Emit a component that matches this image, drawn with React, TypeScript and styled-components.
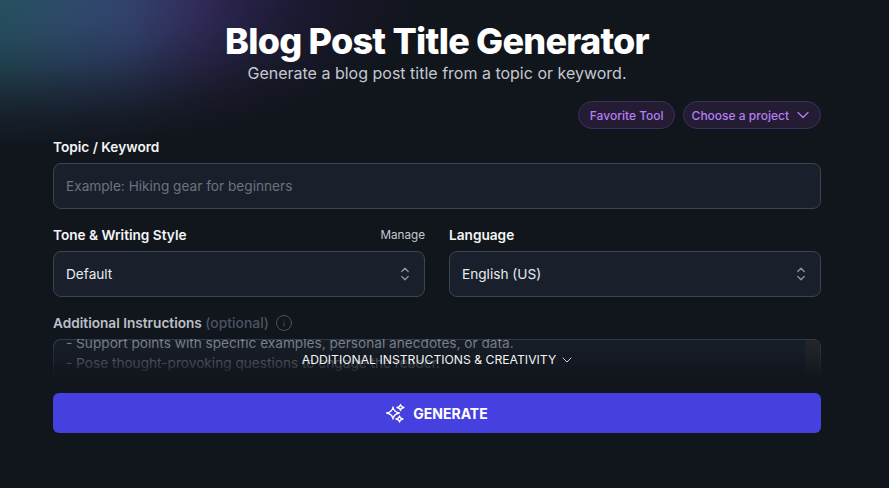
import React from 'react';
import styled, { createGlobalStyle } from 'styled-components';
import { ChevronDown, Info } from 'lucide-react';

const GlobalStyle = createGlobalStyle`
  html, body {
    margin: 0;
    padding: 0;
    background-color: #11151c;
  }
  * {
    box-sizing: border-box;
  }
`

const Page = styled.div`
  height: 488px;
  overflow: hidden;
  padding: 0 68px 0 53px;
  font-family: Inter, "Liberation Sans", sans-serif;
  color: #f3f4f6;
  background-color: #11151c;
  background-image:
    radial-gradient(
      ellipse 420px 150px at 0 0,
      rgba(17, 21, 28, 0) 0%,
      rgba(17, 21, 28, 0.1) 25%,
      rgba(17, 21, 28, 0.32) 45%,
      rgba(17, 21, 28, 0.6) 62%,
      rgba(17, 21, 28, 0.84) 80%,
      #11151c 100%
    ),
    linear-gradient(to right, #265060 0, #384a7c 130px, #42357a 210px, #38256a 300px, #38256a 420px);
  background-repeat: no-repeat;
  background-size: 100% 100%, 420px 150px;
`

const Header = styled.header`
  padding-top: 20px;
  text-align: center;
`

const Title = styled.h1`
  margin: 0;
  font-size: 36px;
  line-height: 42px;
  font-weight: 800;
  letter-spacing: -0.75px;
  color: #fff;
`

const Subtitle = styled.p`
  margin: 0;
  font-size: 16px;
  line-height: 22px;
  color: #c4c8d0;
`

const Actions = styled.div`
  display: flex;
  justify-content: flex-end;
  gap: 8px;
  margin-top: 17px;
`

const Pill = styled.button`
  display: flex;
  align-items: center;
  gap: 4px;
  height: 28px;
  padding: 0 10.5px;
  border: 1px solid #3d2f5a;
  border-radius: 14px;
  background: #231c33;
  color: #b67ef5;
  font-family: inherit;
  font-size: 12px;
  font-weight: 500;
`

const SelectPill = styled(Pill)`
  padding: 0 7px 0 7.5px;
`

const Field = styled.div`
  display: flex;
  flex-direction: column;
  min-width: 0;
`

const LabelRow = styled.div`
  display: flex;
  align-items: center;
  justify-content: space-between;
  height: 16px;
  margin-bottom: 8px;
`

const Label = styled.label`
  font-size: 13.65px;
  font-weight: 600;
  color: #f3f4f6;
`

const ManageLink = styled.span`
  font-size: 11.7px;
  color: #c4c8d0;
`

const Input = styled.div`
  display: flex;
  align-items: center;
  justify-content: space-between;
  height: 46px;
  padding: 0 14px 1px 12px;
  border: 1px solid #3c4450;
  border-radius: 8px;
  background: #19202b;
  font-size: 13.65px;
  color: #e8eaee;
`

const Placeholder = styled.span`
  color: #6b7280;
`

const TopicField = styled(Field)`
  margin-top: 10px;
`

const Row = styled.div`
  display: grid;
  grid-template-columns: 1fr 1fr;
  gap: 24px;
  margin-top: 18px;
`

const InstructionsField = styled(Field)`
  margin-top: 18px;
`

const MutedLabel = styled(Label)`
  line-height: 15px;
  color: #bcc0c8;
`

const Optional = styled.span`
  color: #4b5563;
  font-size: 13.9px;
  line-height: 1;
  font-weight: 500;
`

const LabelGroup = styled.div`
  display: flex;
  align-items: center;
  gap: 6px;
  color: #4b5563;
`

const TextBox = styled.div`
  position: relative;
  display: flex;
  flex-direction: column;
  justify-content: flex-end;
  height: 41px;
  padding: 0 13px 7px;
  overflow: hidden;
  border-radius: 8px 8px 0 0;
  box-shadow: inset 0 0 0 1px #3c4450;
  background: #19202b;
  font-size: 13.65px;
  line-height: 20px;
  color: #a3a8b0;
`

const TextLine = styled.div`
  white-space: nowrap;
`

const Scrollbar = styled.div`
  position: absolute;
  top: 1px;
  right: 1px;
  bottom: 0;
  width: 15px;
  background: #2a2a2c;
`

const Fade = styled.div`
  position: absolute;
  inset: 0;
  background: linear-gradient(to bottom, rgba(17, 21, 28, 0.2) 0%, rgba(17, 21, 28, 0.62) 55%, #11151c 95%);
`

const Toggle = styled.div`
  position: absolute;
  left: 0;
  right: 0;
  top: 13px;
  display: flex;
  align-items: center;
  justify-content: center;
  gap: 3px;
  padding-left: 3px;
  font-size: 12.2px;
  line-height: 16px;
  color: #f3f4f6;
`

const GenerateButton = styled.button`
  display: flex;
  align-items: center;
  justify-content: center;
  gap: 8px;
  width: 100%;
  height: 40px;
  margin-top: 13px;
  border: 0;
  border-radius: 6px;
  background: #4740e0;
  color: #fff;
  font-family: inherit;
  font-size: 14px;
  font-weight: 700;
`

const UpDownIcon: React.FC = () => (
  <svg width="10" height="14" viewBox="0 0 10 14" fill="none" stroke="#8f959e" strokeWidth="1.3" strokeLinecap="round" strokeLinejoin="round">
    <path d="M1.8 4.5 L5 1.3 L8.2 4.5" />
    <path d="M1.8 9.5 L5 12.7 L8.2 9.5" />
  </svg>
);

const SparkleIcon: React.FC = () => (
  <svg width="19" height="20" viewBox="0 0 19 20" fill="none" stroke="#fff" strokeWidth="1.3" strokeLinejoin="round">
    <path d="M7 4 Q7.6 9 13.4 10 Q7.6 11 7 16 Q6.4 11 .6 10 Q6.4 9 7 4 Z" />
    <path d="M14.5 1.5 Q14.8 4 18 4.5 Q14.8 5 14.5 7.5 Q14.2 5 11 4.5 Q14.2 4 14.5 1.5 Z" />
    <path d="M13.5 13 Q13.8 15.5 17 16 Q13.8 16.5 13.5 19 Q13.2 16.5 10 16 Q13.2 15.5 13.5 13 Z" />
  </svg>
);

const App: React.FC = () => {
  return (
    <>
      <GlobalStyle />
      <Page>
        <Header>
          <Title>Blog Post Title Generator</Title>
          <Subtitle>Generate a blog post title from a topic or keyword.</Subtitle>
        </Header>

        <Actions>
          <Pill>Favorite Tool</Pill>
          <SelectPill>
            Choose a project
            <ChevronDown size={20} strokeWidth={1.5} />
          </SelectPill>
        </Actions>

        <TopicField>
          <LabelRow>
            <Label>Topic / Keyword</Label>
          </LabelRow>
          <Input>
            <Placeholder>Example: Hiking gear for beginners</Placeholder>
          </Input>
        </TopicField>

        <Row>
          <Field>
            <LabelRow>
              <Label>Tone &amp; Writing Style</Label>
              <ManageLink>Manage</ManageLink>
            </LabelRow>
            <Input>
              Default
              <UpDownIcon />
            </Input>
          </Field>
          <Field>
            <LabelRow>
              <Label>Language</Label>
            </LabelRow>
            <Input>
              English (US)
              <UpDownIcon />
            </Input>
          </Field>
        </Row>

        <InstructionsField>
          <LabelRow>
            <LabelGroup>
              <MutedLabel>
                Additional Instructions <Optional>(optional)</Optional>
              </MutedLabel>
              <Info size={18} strokeWidth={1.25} />
            </LabelGroup>
          </LabelRow>
          <TextBox>
            <TextLine>- Support points with specific examples, personal anecdotes, or data.</TextLine>
            <TextLine>- Pose thought-provoking questions to engage the reader.</TextLine>
            <Scrollbar />
            <Fade />
            <Toggle>
              ADDITIONAL INSTRUCTIONS &amp; CREATIVITY
              <ChevronDown size={16} strokeWidth={1.25} />
            </Toggle>
          </TextBox>
        </InstructionsField>

        <GenerateButton>
          <SparkleIcon />
          GENERATE
        </GenerateButton>
      </Page>
    </>
  );
};

export default App;
